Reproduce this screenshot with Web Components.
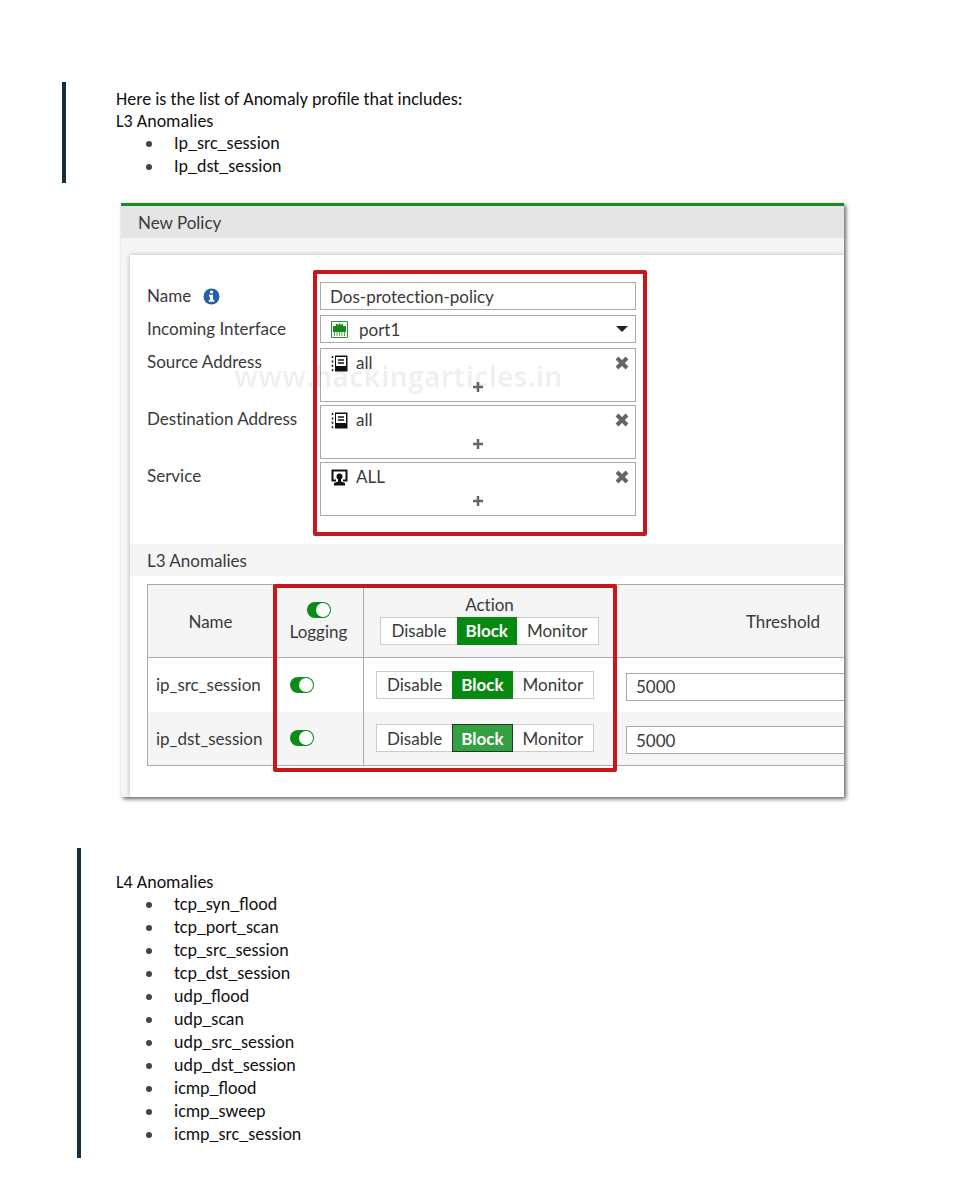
<!DOCTYPE html>
<html lang="en">
<head>
<meta charset="utf-8">
<meta name="viewport" content="width=device-width, initial-scale=1">
<title>Anomaly profile</title>
<style>
  body { margin: 0; background: #fff; color: #111; font-family: Carlito, Lato, sans-serif; }
</style>
</head>
<body>
<doc-page>
  <doc-note class="first">
    <p>Here is the list of Anomaly profile that includes:</p>
    <p>L3 Anomalies</p>
    <anomaly-list items="Ip_src_session Ip_dst_session"></anomaly-list>
  </doc-note>
  <policy-window heading="New Policy">
    <policy-form></policy-form>
    <anomaly-table heading="L3 Anomalies"></anomaly-table>
  </policy-window>
  <doc-note class="second">
    <p>L4 Anomalies</p>
    <anomaly-list items="tcp_syn_flood tcp_port_scan tcp_src_session tcp_dst_session udp_flood udp_scan udp_src_session udp_dst_session icmp_flood icmp_sweep icmp_src_session"></anomaly-list>
  </doc-note>
</doc-page>

<script>
const BASE = `
  *, *::before, *::after { box-sizing: border-box; }
  button, input, select { font: inherit; font-variant-ligatures: inherit; color: inherit; margin: 0; }
`;

/** Shared shadow root setup: each element returns its markup from template(). */
class BaseElement extends HTMLElement {
  constructor() {
    super();
    this.attachShadow({ mode: "open" });
  }
  connectedCallback() {
    if (this.shadowRoot.childElementCount) return;
    this.shadowRoot.innerHTML = `<style>${BASE}</style>` + this.template();
    this.ready();
  }
  ready() {}
}

class DocPage extends BaseElement {
  template() {
    return `
      <style>
        :host { display:flex; flex-direction:column; padding:82px 116px 42px 62px; }
        ::slotted(policy-window) { margin:20px 0 51px 59px; }
        ::slotted(.first) { --pad:6px 0 5px 50px; }
        ::slotted(.second) { margin-left:15px; --pad:23px 0 12px 35px; }
      </style>
      <slot></slot>`;
  }
}

/** Block of document text with a change bar on its left. */
class DocNote extends BaseElement {
  template() {
    return `
      <style>
        :host { display:block; border-left:4px solid #12303f; padding:var(--pad); font-size:18px; line-height:22px; }
        ::slotted(p) { margin:0; }
      </style>
      <slot></slot>`;
  }
}

class AnomalyList extends BaseElement {
  template() {
    const items = this.getAttribute("items").split(" ");
    return `
      <style>
        :host { display:block; }
        ul { list-style:none; margin:0; padding:0 0 0 30px; line-height:23px; }
        li { display:flex; align-items:center; gap:22px; }
        li::before { content:""; width:6px; height:6px; border-radius:50%; background:#444; }
      </style>
      <ul>${items.map((i) => `<li>${i}</li>`).join("")}</ul>`;
  }
}

class PolicyWindow extends BaseElement {
  template() {
    return `
      <style>
        :host { display:block; border-top:3px solid #1c8a24; background:#f5f5f5; color:#3a3a3a;
                font-family:Lato, sans-serif; font-size:17px; font-variant-ligatures:none;
                box-shadow:2px 2px 4px rgba(0,0,0,.6); }
        h2 { margin:0; padding:2px 17px 0; font-size:17px; font-weight:400; line-height:30px; background:#e5e5e6; }
        .clip { overflow:hidden; padding:17px 0 0 9px; }
        .panel { background:#fff; padding-bottom:31px; box-shadow:0 0 5px rgba(0,0,0,.25); }
      </style>
      <h2>${this.getAttribute("heading")}</h2>
      <div class="clip"><div class="panel"><slot></slot></div></div>`;
  }
}

/** Label on the left, control on the right. */
class FormRow extends BaseElement {
  template() {
    return `
      <style>
        :host { display:grid; grid-template-columns:173px minmax(0, 316px); align-items:start; }
        .label { display:flex; align-items:center; gap:12px; line-height:28px; white-space:nowrap; }
      </style>
      <div class="label"><slot name="label"></slot></div>
      <slot></slot>`;
  }
}

const ICONS = {
  address: `<svg width="17" height="17" viewBox="0 0 17 17" aria-hidden="true">
    <path d="M4 .5h12.500v16H4z" fill="#111"/><path d="M5 2h10v9H5z" fill="#fff"/>
    <path d="M7 5h6M7 8h6" stroke="#111" stroke-width="1.500"/>
    <path d="M1.500 1v15.500" stroke="#111" stroke-width="1.500" stroke-dasharray="2 2.400"/></svg>`,
  service: `<svg width="17" height="17" viewBox="0 0 17 17" aria-hidden="true">
    <path d="M5 11.500H1.500v-10h14v10H12" fill="none" stroke="#111" stroke-width="2"/>
    <circle cx="8.500" cy="7.500" r="3" fill="#111"/><path d="M7 8h3v4.500l4 1.500v2.500H3V14l4-1.500z" fill="#111"/></svg>`,
};

/** Multi-value picker with one chosen entry, a remove button and an add button. */
class EntryPicker extends BaseElement {
  template() {
    return `
      <style>
        :host { display:flex; flex-direction:column; height:54px; border:1px solid #aaa; background:#fff; }
        .entry { display:flex; align-items:center; gap:8px; padding:0 6px 0 10px; line-height:28px; }
        .entry span { flex:1; }
        svg { display:block; }
        button { border:0; padding:0; background:none; cursor:pointer; }
        .add { align-self:center; padding:5px; }
      </style>
      <div class="entry">
        ${ICONS[this.getAttribute("icon")]}
        <span>${this.getAttribute("value")}</span>
        <button type="button" aria-label="Remove"><svg width="14" height="14" viewBox="0 0 14 14"><path d="M2 2l10 10M12 2L2 12" stroke="#666" stroke-width="4"/></svg></button>
      </div>
      <button type="button" class="add" aria-label="Add"><svg width="10" height="10" viewBox="0 0 10 10"><path d="M5 0v10M0 5h10" stroke="#666" stroke-width="2.500"/></svg></button>`;
  }
}

class PolicyForm extends BaseElement {
  template() {
    return `
      <style>
        :host { display:block; position:relative; padding:27px 17px 28px; }
        form { display:grid; gap:5px; }
        .pickers { display:grid; gap:3px; }
        input, select { width:100%; height:28px; border:1px solid #aaa; border-radius:0; background:#fff; }
        input { padding:0 9px; }
        select { appearance:none; padding:0 38px; }
        .select { display:grid; align-items:center; }
        .select > * { grid-area:1 / 1; }
        .select svg { pointer-events:none; }
        .port { margin-left:11px; }
        .caret { justify-self:end; margin-right:8px; }
        .watermark { position:absolute; left:104px; top:103px; font:700 28px/36px "Open Sans", sans-serif; color:rgba(0,0,0,.06); pointer-events:none; }
        .mark { position:absolute; left:183px; top:15px; bottom:8px; width:334px; border:4px solid #c8161d; border-radius:2px; pointer-events:none; }
      </style>
      <form>
        <form-row>
          <label slot="label" for="name">Name</label>
          <svg slot="label" width="17" height="17" viewBox="0 0 17 17" aria-hidden="true"><circle cx="8.500" cy="8.500" r="8" fill="#2461a5"/><path d="M7 2.800h3v2.500H7zM6 6.700h4v5h1.300v2H5.800v-2H7v-3H6z" fill="#fff"/></svg>
          <input id="name" type="text" value="Dos-protection-policy">
        </form-row>
        <form-row>
          <label slot="label" for="port">Incoming Interface</label>
          <div class="select">
            <select id="port"><option>port1</option></select>
            <svg class="port" width="17" height="17" viewBox="0 0 17 17" aria-hidden="true"><path d="M.5.5h16v16H.5z" fill="#fff" stroke="#348b3a"/><path d="M2 5h3V3h1.500v1h1V2.500h2v1.500h1V3H12v2h3v6H2z" fill="#128a1c"/><path d="M3.500 11v4M6 11v4M8.500 11v4M11 11v4M13.500 11v4" stroke="#55a55b"/></svg>
            <svg class="caret" width="12" height="6" viewBox="0 0 12 6" aria-hidden="true"><path d="M0 0h12L6 6z" fill="#222"/></svg>
          </div>
        </form-row>
        <div class="pickers">
          <form-row>
            <span slot="label" id="src">Source Address</span>
            <entry-picker role="group" aria-labelledby="src" icon="address" value="all"></entry-picker>
          </form-row>
          <form-row>
            <span slot="label" id="dst">Destination Address</span>
            <entry-picker role="group" aria-labelledby="dst" icon="address" value="all"></entry-picker>
          </form-row>
          <form-row>
            <span slot="label" id="svc">Service</span>
            <entry-picker role="group" aria-labelledby="svc" icon="service" value="ALL"></entry-picker>
          </form-row>
        </div>
      </form>
      <div class="watermark">www.hackingarticles.in</div>
      <div class="mark"></div>`;
  }
}

class ToggleSwitch extends BaseElement {
  template() {
    return `
      <style>
        :host { display:block; width:24px; }
        input { appearance:none; display:flex; width:24px; height:16px; padding:1px; border-radius:8px; background:#bbb; cursor:pointer; }
        input::before { content:""; width:14px; height:14px; border-radius:50%; background:#fff; }
        input:checked { background:#0c8c17; justify-content:flex-end; }
      </style>
      <input type="checkbox" role="switch" checked aria-label="${this.getAttribute("label")}">`;
  }
}

/** Disable / Block / Monitor button group. */
class ActionSwitch extends BaseElement {
  template() {
    return `
      <style>
        :host { display:flex; width:max-content; height:28px; background:#fff; border:1px solid #ccc; }
        button { border:0; padding:0 10px; background:none; white-space:nowrap; cursor:pointer; }
        button[aria-pressed=true] { margin:-1px 0; padding:0 9px; background:#088a12; color:#fff; font-weight:700; }
        :host([active]) button[aria-pressed=true] { background:#35a042; border:1px solid #173d1b; padding:0 8px; }
      </style>
      ${["Disable", "Block", "Monitor"].map((n) =>
        `<button type="button" aria-pressed="${n === "Block"}">${n}</button>`).join("")}`;
  }
  ready() {
    const buttons = [...this.shadowRoot.querySelectorAll("button")];
    for (const b of buttons) {
      b.addEventListener("click", () => buttons.forEach((o) => o.setAttribute("aria-pressed", o === b)));
    }
  }
}

class AnomalyTable extends BaseElement {
  row(name, active) {
    return `
      <tr>
        <td class="name">${name}</td>
        <td class="log"><toggle-switch label="${name} logging"></toggle-switch></td>
        <td class="act"><action-switch ${active ? "active" : ""}></action-switch></td>
        <td class="limit"><input type="text" value="5000" aria-label="${name} threshold"></td>
      </tr>`;
  }
  template() {
    return `
      <style>
        :host { display:block; }
        h3 { margin:0; padding:1px 17px 0; font-size:17px; font-weight:400; line-height:31px; background:#f5f5f5; }
        .wrap { position:relative; padding:8px 0 0 17px; }
        table { width:804px; table-layout:fixed; border-collapse:collapse; border:1px solid #aaa; }
        th { height:73px; padding:8px 0 0; font-weight:400; line-height:24px; vertical-align:top;
             border:1px solid #aaa; background:#f5f5f5; }
        th.single { padding:2px 0 0; vertical-align:middle; }
        th.logging { padding-top:17px; }
        th toggle-switch, th action-switch { margin:0 auto; }
        .logging span { display:block; padding-top:2px; }
        td { height:54px; padding:0; border-left:1px solid #aaa; }
        td.limit, th:last-child { border-left-color:transparent; }
        tbody tr:nth-child(even) { background:#f5f5f5; }
        .name { padding-left:8px; }
        .log { padding-left:16px; }
        .act { padding-left:12px; }
        .limit { padding:4px 10px 0; }
        .limit input { display:block; width:100%; height:28px; padding:0 9px; border:1px solid #aaa; border-radius:0; background:#fff; }
        .mark { position:absolute; left:143px; top:8px; bottom:-6px; width:344px; border:4px solid #c8161d; border-radius:2px; pointer-events:none; }
      </style>
      <h3>${this.getAttribute("heading")}</h3>
      <div class="wrap">
        <table>
          <colgroup><col style="width:126px"><col style="width:90px"><col style="width:252px"><col></colgroup>
          <thead>
            <tr>
              <th class="single">Name</th>
              <th class="logging"><toggle-switch label="Log all"></toggle-switch><span>Logging</span></th>
              <th>Action<action-switch></action-switch></th>
              <th class="single">Threshold</th>
            </tr>
          </thead>
          <tbody>${this.row("ip_src_session")}${this.row("ip_dst_session", true)}</tbody>
        </table>
        <div class="mark"></div>
      </div>`;
  }
}

customElements.define("doc-page", DocPage);
customElements.define("doc-note", DocNote);
customElements.define("anomaly-list", AnomalyList);
customElements.define("policy-window", PolicyWindow);
customElements.define("form-row", FormRow);
customElements.define("entry-picker", EntryPicker);
customElements.define("policy-form", PolicyForm);
customElements.define("toggle-switch", ToggleSwitch);
customElements.define("action-switch", ActionSwitch);
customElements.define("anomaly-table", AnomalyTable);
</script>
</body>
</html>
